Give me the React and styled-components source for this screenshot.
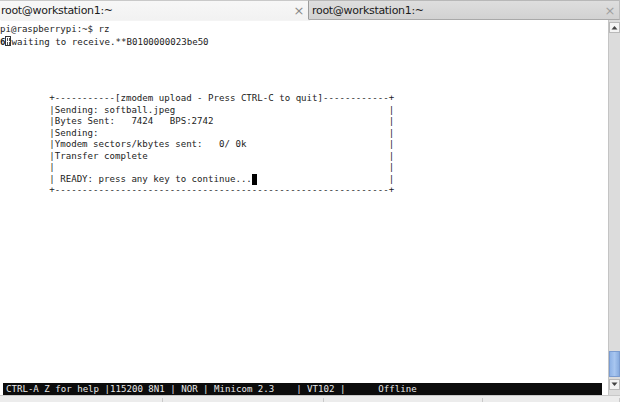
import React from "react";
import styled, { createGlobalStyle } from "styled-components";

const Global = createGlobalStyle`
  html, body { margin: 0; padding: 0; background: #ffffff; }
  body { width: 620px; height: 402px; overflow: hidden; }
`;

const Window = styled.div`
  width: 620px;
  height: 402px;
  display: flex;
  flex-direction: column;
  background: #ffffff;
  overflow: hidden;
`;

const TabBar = styled.div`
  display: flex;
  height: 20px;
  flex: none;
  background: #cfcfcf;
`;

const Tab = styled.div`
  flex: 1;
  display: flex;
  align-items: center;
  justify-content: space-between;
  box-sizing: border-box;
  padding: 1px 4px 0 ${(p) => (p.$active ? "1px" : "3px")};
  font-family: "DejaVu Sans", sans-serif;
  font-size: 11px;
  letter-spacing: -0.3px;
  color: #1a1a1a;
  background: ${(p) =>
    p.$active
      ? "linear-gradient(#f7f7f7, #f2f2f2)"
      : "linear-gradient(#dedede, #d2d2d2)"};
  border-top: 1px solid ${(p) => (p.$active ? "#c9c9c9" : "#b8b8b8")};
  border-bottom: 1px solid ${(p) => (p.$active ? "#f2f2f2" : "#a9a9a9")};
  border-right: 1px solid ${(p) => (p.$active ? "#9c9c9c" : "#bdbdbd")};
  box-shadow: ${(p) => (p.$active ? "1px 0 1px rgba(0,0,0,0.25)" : "none")};
  ${(p) => (p.$active ? "flex: 0 0 309px;" : "")}
`;

const Close = styled.span`
  font-size: 13px;
  color: ${(p) => (p.$active ? "#8a8a8a" : "#a0a0a0")};
  line-height: 1;
`;

const Body = styled.div`
  flex: 1;
  display: flex;
  min-height: 0;
`;

const Terminal = styled.div`
  flex: 1;
  padding-top: 4px;
  font-family: "DejaVu Sans Mono", monospace;
  font-size: 9.1px;
  line-height: 11.5px;
  color: #1c1c1c;
  display: flex;
  flex-direction: column;
`;

const Line = styled.div`
  white-space: pre;
  height: 11.5px;
`;

const StatusLine = styled.div`
  white-space: pre;
  height: 12px;
  line-height: 12px;
  margin: 7px 4px 0 3px;
  padding-left: 3px;
  background: #0c0c0c;
  color: #e8e8e8;
`;

const Cursor = styled.span`
  display: inline-block;
  width: 5.5px;
  height: 11px;
  background: #000;
  vertical-align: top;
`;

const HexBox = styled.span`
  display: inline-block;
  box-sizing: border-box;
  width: 6px;
  height: 10px;
  border: 1px solid #333;
  margin: 0 0.5px 0 -0.5px;
  vertical-align: -1px;
  background:
    linear-gradient(#555, #555) 1px 1px / 1px 3px no-repeat,
    linear-gradient(#555, #555) 3px 1px / 1px 3px no-repeat,
    linear-gradient(#555, #555) 1px 5px / 1px 3px no-repeat,
    linear-gradient(#555, #555) 3px 5px / 1px 3px no-repeat;
`;

const Scrollbar = styled.div`
  flex: 0 0 11px;
  margin-left: 2px;
  display: flex;
  flex-direction: column;
  background: #dcdcdc;
  border-left: 1px solid #c4c4c4;
  padding-bottom: 5px;
`;

const Arrow = styled.div`
  height: 11px;
  flex: none;
  display: flex;
  align-items: center;
  justify-content: center;
  background: #f4f4f4;
  border: 1px solid #b9b9b9;
  box-sizing: border-box;
  margin-top: 2px;
`;

const Track = styled.div`
  flex: 1;
  display: flex;
  flex-direction: column;
  justify-content: flex-end;
`;

const Thumb = styled.div`
  height: 26px;
  background: linear-gradient(90deg, #8fb3e6, #a8c6f0 50%, #88acdf);
  border: 1px solid #7b9cd0;
  box-sizing: border-box;
`;

const Footer = styled.div`
  flex: 0 0 6px;
  display: flex;
  background: #ececec;
  border-top: 1px solid #c8c8c8;
`;

const FooterCell = styled.div`
  flex: ${(p) => p.$w};
  border-right: 1px solid #c9c9c9;
  margin-top: 2px;
`;

const Tri = ({ up }) => (
  <svg width="7" height="5" viewBox="0 0 7 5">
    <path d={up ? "M0.5 4.5 L3.5 1 L6.5 4.5 Z" : "M0.5 0.5 L3.5 4 L6.5 0.5 Z"} fill="#444" />
  </svg>
);

const dash = (n) => "-".repeat(n);
const pad = (s, n) => s + " ".repeat(Math.max(0, n - s.length));
const indent = " ".repeat(9);
const inner = 61;

const boxLines = [
  "+" + dash(11) + "[zmodem upload - Press CTRL-C to quit]" + dash(12) + "+",
  "|" + pad("Sending: softball.jpeg", inner) + "|",
  "|" + pad("Bytes Sent:   7424   BPS:2742", inner) + "|",
  "|" + pad("Sending:", inner) + "|",
  "|" + pad("Ymodem sectors/kbytes sent:   0/ 0k", inner) + "|",
  "|" + pad("Transfer complete", inner) + "|",
  "|" + pad("", inner) + "|",
];
const readyText = " READY: press any key to continue...";
const bottomLine = "+" + dash(inner) + "+";

const status =
  "CTRL-A Z for help |115200 8N1 | NOR | Minicom 2.3    | VT102 |      Offline";

export default function App() {
  return (
    <Window>
      <Global />
      <TabBar>
        <Tab $active>
          <span>root@workstation1:~</span>
          <Close $active>×</Close>
        </Tab>
        <Tab>
          <span>root@workstation1:~</span>
          <Close>×</Close>
        </Tab>
      </TabBar>
      <Body>
        <Terminal>
          <Line>pi@raspberrypi:~$ rz</Line>
          <Line>
            <b>6</b>
            <HexBox />
            waiting to receive.**B0100000023be50
          </Line>
          <Line />
          <Line />
          <Line />
          <Line />
          {boxLines.map((l, i) => (
            <Line key={i}>{indent + l}</Line>
          ))}
          <Line>
            {indent + "|" + readyText}
            <Cursor />
            {" ".repeat(inner - readyText.length - 1) + "|"}
          </Line>
          <Line>{indent + bottomLine}</Line>
          <div style={{ flex: 1 }} />
          <StatusLine>{status}</StatusLine>
        </Terminal>
        <Scrollbar>
          <Arrow>
            <Tri up />
          </Arrow>
          <Track>
            <Thumb />
          </Track>
          <Arrow>
            <Tri />
          </Arrow>
        </Scrollbar>
      </Body>
      <Footer>
        <FooterCell $w="0 0 162px" />
        <FooterCell $w="0 0 160px" />
        <FooterCell $w="0 0 158px" />
        <FooterCell $w="1" />
      </Footer>
    </Window>
  );
}
